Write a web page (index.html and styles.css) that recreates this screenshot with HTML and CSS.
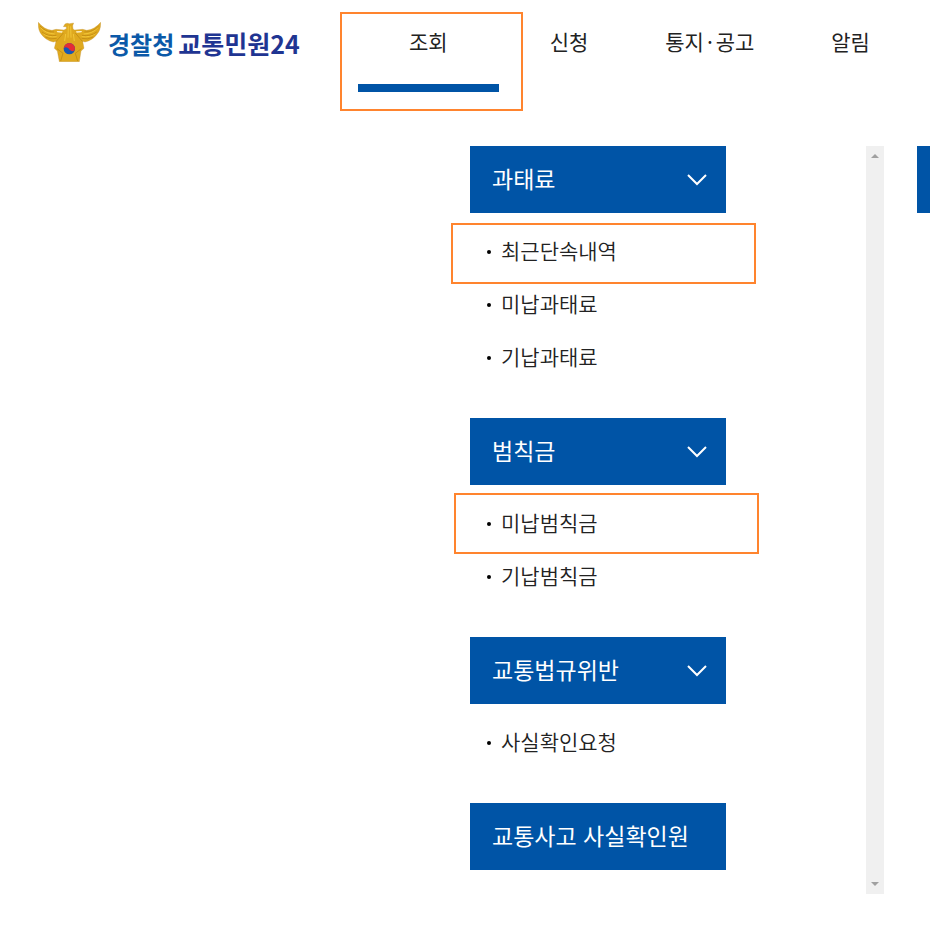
FILE: index.html
```html
<!DOCTYPE html>
<html lang="ko">
<head>
  <meta charset="UTF-8">
  <meta name="viewport" content="width=device-width, initial-scale=1">
  <title>경찰청 교통민원24</title>
  <link rel="stylesheet" href="styles.css">
</head>
<body>
  <header class="header">
    <a href="#" class="logo">
      <svg class="emblem" viewBox="12 19 189 120" aria-hidden="true">
        <path fill="#dfa91f" stroke="#c0913f" stroke-width="1" stroke-linejoin="round" d="M13 20 Q30 42 54 44 L66 41 L90 43 L97 39 L97 33 L88 33 L93 25 Q99 21 106 24 L119 22 L116 30 L117 40 L122 43 L146 41 L158 44 Q182 42 200 20 Q201 43 188 57 Q175 74 153 79 L146 77 L150 98 L141 106 L136 138 L76 138 L70 106 L61 98 L66 77 L58 79 Q36 74 23 57 Q11 43 13 20Z"/>
        <path fill="none" stroke="#f2c637" stroke-width="3" d="M20 36 Q35 54 62 55 M28 54 Q44 66 68 63 M192 36 Q176 54 149 55 M184 54 Q168 66 143 63 M103 30 L102 66 M110 32 L111 66 M95 55 L92 76 M118 55 L121 76"/>
        <path fill="none" stroke="#b9830f" stroke-width="2" d="M18 31 Q34 49 60 49 M24 49 Q41 63 67 59 M34 64 Q50 73 68 68 M194 31 Q178 49 151 49 M188 49 Q171 63 144 59 M178 64 Q162 73 143 68 M66 78 L88 52 M146 78 L124 52 M69 99 L87 113 L80 136 M142 99 L124 113 L131 136"/>
        <path fill="#fff3d2" d="M68 46 L86 47 L84 51 L70 50Z M126 47 L144 46 L142 50 L128 51Z"/>
        <circle cx="106" cy="99" r="17" fill="#1558b4"/>
        <path fill="#e52c35" d="M89 99 A17 17 0 0 1 123 99 Q121 109 113 106 Q107 104 103 98 Q94 91 89 99Z"/>
      </svg>
      <span class="logo-text"><span class="police">경찰청</span><span class="service">교통민원24</span></span>
    </a>
    <nav class="nav">
      <a href="#" class="nav-link active">조회</a>
      <a href="#" class="nav-link">신청</a>
      <a href="#" class="nav-link">통지<span class="dot">·</span>공고</a>
      <a href="#" class="nav-link">알림</a>
    </nav>
  </header>

  <main class="content">
    <div class="menu">
      <section class="group">
        <button type="button" class="group-title"><span>과태료</span>
          <svg class="chevron" viewBox="0 0 20 12" aria-hidden="true"><path d="M1 1 L10 10 L19 1"/></svg>
        </button>
        <ul class="list">
          <li class="marked"><a href="#">최근단속내역</a></li>
          <li><a href="#">미납과태료</a></li>
          <li><a href="#">기납과태료</a></li>
        </ul>
      </section>
      <section class="group">
        <button type="button" class="group-title"><span>범칙금</span>
          <svg class="chevron" viewBox="0 0 20 12" aria-hidden="true"><path d="M1 1 L10 10 L19 1"/></svg>
        </button>
        <ul class="list">
          <li class="marked marked-unpaid"><a href="#">미납범칙금</a></li>
          <li><a href="#">기납범칙금</a></li>
        </ul>
      </section>
      <section class="group">
        <button type="button" class="group-title"><span>교통법규위반</span>
          <svg class="chevron" viewBox="0 0 20 12" aria-hidden="true"><path d="M1 1 L10 10 L19 1"/></svg>
        </button>
        <ul class="list">
          <li><a href="#">사실확인요청</a></li>
        </ul>
      </section>
      <section class="group">
        <button type="button" class="group-title"><span>교통사고 사실확인원</span></button>
      </section>
    </div>
    <div class="scrollbar">
      <button type="button" class="scroll-btn" aria-label="위로">
        <svg viewBox="0 0 8 4" aria-hidden="true"><path d="M0 4 L4 0 L8 4Z"/></svg>
      </button>
      <button type="button" class="scroll-btn" aria-label="아래로">
        <svg viewBox="0 0 8 4" aria-hidden="true"><path d="M0 0 L4 4 L8 0Z"/></svg>
      </button>
    </div>
    <div class="next-panel"></div>
  </main>
</body>
</html>
```
FILE: styles.css
```css
* {
  box-sizing: border-box;
}
body {
  margin: 0;
  background: #ffffff;
  color: #222222;
  font-family: "Noto Sans CJK KR", sans-serif;
  font-size: 21px;
}
a {
  color: inherit;
  text-decoration: none;
}
button {
  font: inherit;
  border: none;
  cursor: pointer;
}

/* header */
.header {
  display: flex;
  align-items: flex-start;
  padding: 12px 9px 36px 38px;
}
.logo {
  display: flex;
  gap: 7px;
  width: 320px;
  padding-top: 10px;
}
.emblem {
  width: 63px;
  height: 40px;
}
.logo-text {
  display: flex;
  align-items: center;
  gap: 4px;
  height: 42px;
  font-size: 24px;
  font-weight: 700;
  white-space: nowrap;
}
.police {
  color: #0b59a8;
}
.service {
  color: #1f3592;
  font-size: 25px;
}
.nav {
  display: flex;
  flex: 1;
}
.nav-link {
  position: relative;
  flex: 1;
  height: 98px;
  line-height: 58px;
  text-align: center;
  white-space: nowrap;
}
.nav-link .dot {
  padding: 0 3px;
}
.nav-link.active::before {
  content: "";
  position: absolute;
  inset: 0 -24px -1px -18px;
  border: 2px solid #ff842e;
}
.nav-link.active::after {
  content: "";
  position: absolute;
  top: 72px;
  left: 0;
  right: 0;
  height: 8px;
  background: #0054a6;
}

/* menu */
.content {
  display: flex;
  justify-content: flex-end;
}
.menu {
  width: 256px;
  margin-right: 140px;
  padding-bottom: 24px;
}
.group-title {
  display: flex;
  align-items: center;
  justify-content: space-between;
  width: 100%;
  height: 67px;
  padding: 0 19px 0 22px;
  background: #0054a6;
  color: #ffffff;
  font-size: 23px;
}
.group-title span {
  padding-bottom: 4px;
}
.chevron {
  width: 20px;
  height: 12px;
  fill: none;
  stroke: #ffffff;
  stroke-width: 2;
}
.list {
  margin: 0;
  padding: 12px 0 34px;
  list-style: none;
}
.list li {
  position: relative;
  display: flex;
  align-items: center;
  gap: 10px;
  height: 53px;
  padding-left: 17px;
  font-weight: 350;
}
.list li::before {
  content: "";
  width: 4px;
  height: 4px;
  border-radius: 50%;
  background: #000000;
}
.list a {
  padding-bottom: 4px;
}
.marked::after {
  content: "";
  position: absolute;
  inset: -2px -30px -6px -19px;
  border: 2px solid #ff842e;
  pointer-events: none;
}
.marked-unpaid::after {
  inset: -4px -33px -4px -16px;
}

/* scrollbar */
.scrollbar {
  display: flex;
  flex-direction: column;
  justify-content: space-between;
  width: 18px;
  margin-right: 33px;
  background: #f0f0f0;
}
.scroll-btn {
  display: flex;
  align-items: center;
  justify-content: center;
  height: 20px;
  padding: 0;
  background: none;
}
.scroll-btn svg {
  width: 8px;
  height: 4px;
  fill: #a0a0a0;
}
.next-panel {
  width: 13px;
  height: 67px;
  background: #0054a6;
}
```
